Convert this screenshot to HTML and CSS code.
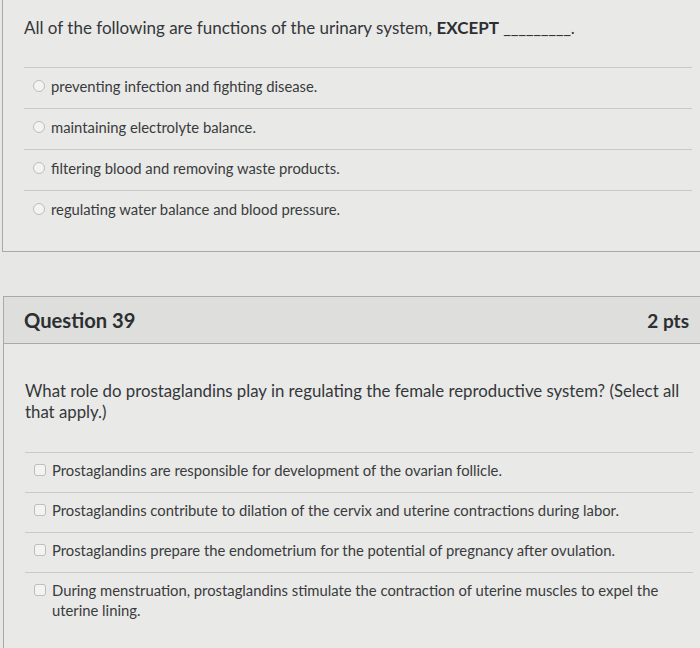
FILE: index.html
```html
<!DOCTYPE html>
<html lang="en">
<head>
<meta charset="utf-8">
<title>Quiz</title>
<link rel="stylesheet" href="styles.css">
</head>
<body>
<div class="page">
  <section class="card card-top">
    <div class="q-text q-text-first">All of the following are functions of the urinary system, <strong>EXCEPT</strong> <span class="blank">_________</span>.</div>
    <div class="answers">
      <label class="answer"><span class="radio"></span><span class="a-text">preventing infection and fighting disease.</span></label>
      <label class="answer"><span class="radio"></span><span class="a-text">maintaining electrolyte balance.</span></label>
      <label class="answer"><span class="radio"></span><span class="a-text">filtering blood and removing waste products.</span></label>
      <label class="answer"><span class="radio"></span><span class="a-text">regulating water balance and blood pressure.</span></label>
    </div>
  </section>

  <section class="card card-q39">
    <header class="q-header">
      <h2 class="q-title">Question 39</h2>
      <span class="q-pts">2 pts</span>
    </header>
    <div class="q-text q-text-second">What role do prostaglandins play in regulating the female reproductive system? (Select all that apply.)</div>
    <div class="answers answers-check">
      <label class="answer"><span class="check"></span><span class="a-text">Prostaglandins are responsible for development of the ovarian follicle.</span></label>
      <label class="answer"><span class="check"></span><span class="a-text">Prostaglandins contribute to dilation of the cervix and uterine contractions during labor.</span></label>
      <label class="answer"><span class="check"></span><span class="a-text">Prostaglandins prepare the endometrium for the potential of pregnancy after ovulation.</span></label>
      <label class="answer"><span class="check"></span><span class="a-text">During menstruation, prostaglandins stimulate the contraction of uterine muscles to expel the uterine lining.</span></label>
    </div>
  </section>
</div>
</body>
</html>
```

FILE: styles.css
```css
html, body {
  margin: 0;
  padding: 0;
  background: #e7e7e5;
  overflow: hidden;
}
body {
  font-family: Lato, "Open Sans", sans-serif;
  color: #34373a;
}
.page {
  width: 700px;
  height: 648px;
  overflow: hidden;
}
.card {
  background: #e9e9e7;
  border: 1px solid #a9a9a7;
  box-sizing: border-box;
}
.card-top {
  margin-left: 2px;
  width: 720px;
  border-top: none;
  border-right: none;
  height: 252px;
}
.card-q39 {
  margin-top: 44px;
  margin-left: 3px;
  width: 720px;
  border-right: none;
  height: 360px;
}
.q-text {
  padding-left: 21px;
}
.q-text-first {
  width: 660px;
  font-size: 17px;
  line-height: 22px;
  padding-top: 17px;
  padding-bottom: 28px;
}
.q-text-first strong {
  font-weight: 700;
  color: #2c2f31;
}
.blank {
  letter-spacing: -0.3px;
}
.answers {
  margin-left: 21px;
  width: 668px;
}
.answer {
  display: flex;
  align-items: flex-start;
  gap: 6px;
  border-top: 1px solid #c9c9c7;
  padding: 8px 0 12px 9px;
  min-height: 20px;
  font-size: 14.8px;
  line-height: 20px;
}
.radio {
  flex: none;
  width: 10px;
  height: 10px;
  margin-top: 4px;
  border: 1px solid #bdbdbb;
  border-radius: 50%;
  background: #f3f3f1;
}
.check {
  flex: none;
  width: 10px;
  height: 10px;
  margin-top: 4px;
  border: 1px solid #bdbdbb;
  border-radius: 3px;
  background: #f3f3f1;
}
.a-text {
  color: #393b3d;
}
.q-header {
  display: flex;
  align-items: center;
  justify-content: space-between;
  height: 47px;
  box-sizing: border-box;
  padding: 0 0 0 20px;
  background: #dededc;
  border-bottom: 1px solid #a9a9a7;
}
.q-title {
  margin: 0;
  font-size: 20.2px;
  font-weight: 700;
  color: #2c2f31;
}
.q-pts {
  margin-right: 34px;
  font-size: 19px;
  font-weight: 700;
  color: #2c2f31;
}
.q-text-second {
  width: 668px;
  font-size: 16.8px;
  line-height: 21px;
  padding-top: 36px;
  padding-bottom: 30px;
}
.answers-check .answer {
  padding-top: 7px;
  padding-bottom: 12px;
}
```
